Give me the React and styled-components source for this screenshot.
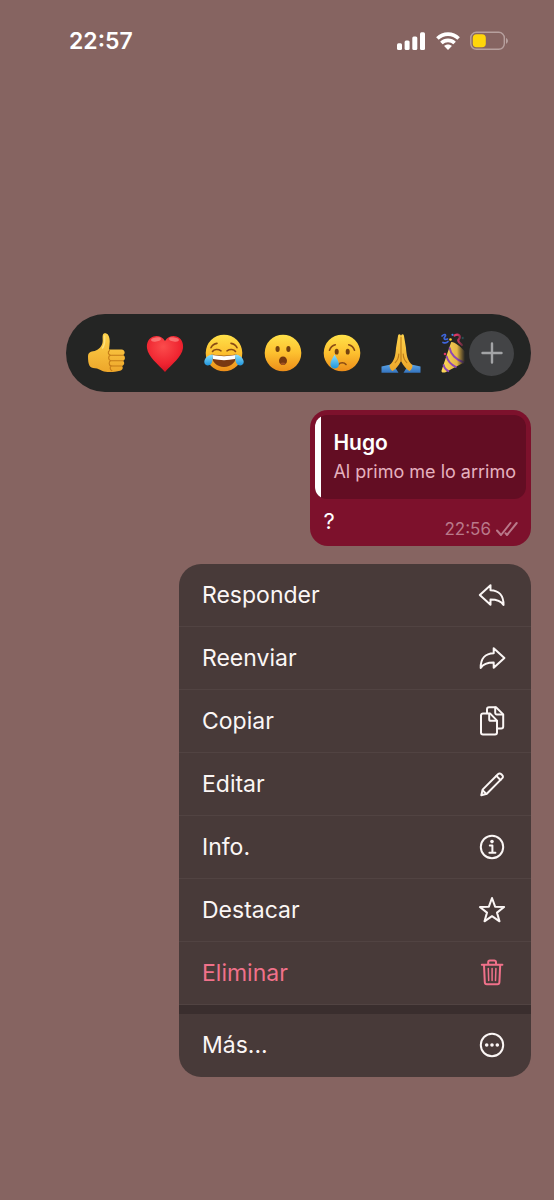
import React from "react";
import styled, { createGlobalStyle } from "styled-components";

const GlobalStyle = createGlobalStyle`
  * {
    box-sizing: border-box;
  }
  body {
    margin: 0;
    background: #866461;
    color: #fff;
    font-family: Inter, "Liberation Sans", sans-serif;
  }
  button {
    font: inherit;
    color: inherit;
    border: 0;
    padding: 0;
    background: none;
    cursor: pointer;
  }
`;

const Screen = styled.div`
  min-height: 100vh;
  background: #866461;
`;

const StatusBar = styled.header`
  display: flex;
  justify-content: space-between;
  align-items: center;
  height: 82px;
  padding: 0 45px 0 69px;
`;

const Clock = styled.time`
  font-size: 23px;
  line-height: 28px;
  font-weight: 600;
`;

const StatusIcons = styled.div`
  display: flex;
  align-items: center;
  gap: 10px;
  svg {
    display: block;
  }
`;

const Content = styled.main`
  display: flex;
  flex-direction: column;
  align-items: flex-end;
  gap: 18px;
  padding: 232px 23px 40px 66px;
`;

const ReactionBar = styled.div`
  display: flex;
  align-items: center;
  width: 100%;
  height: 78px;
  padding: 0 17px 0 20px;
  border-radius: 39px;
  background: #242524;
`;

const ReactionList = styled.div`
  display: flex;
  flex: 1;
  min-width: 0;
  gap: 19px;
  overflow: hidden;
  mask-image: linear-gradient(to left, transparent, #000 8px);
`;

const Reaction = styled.button`
  flex: none;
  width: 40px;
  height: 40px;
  svg {
    display: block;
  }
`;

const AddReaction = styled.button`
  display: grid;
  place-items: center;
  flex: none;
  width: 45px;
  height: 45px;
  margin-left: 4px;
  border-radius: 50%;
  background: #434446;
`;

const Bubble = styled.article`
  padding: 5px;
  border-radius: 18px;
  background: #7d112c;
`;

const Quote = styled.blockquote`
  display: flex;
  margin: 0;
  height: 84px;
  overflow: hidden;
  border-radius: 12px;
  background: #630d23;
  &::before {
    content: "";
    width: 6px;
    background: #fff;
  }
`;

const QuoteBody = styled.div`
  padding: 14px 10px 0 12px;
`;

const QuoteAuthor = styled.div`
  font-size: 21px;
  line-height: 28px;
  font-weight: 600;
`;

const QuoteText = styled.div`
  font-size: 18px;
  line-height: 30px;
  color: #e5b1bf;
`;

const BubbleFooter = styled.div`
  display: flex;
  justify-content: space-between;
  height: 42px;
  padding: 7px 8px 0;
`;

const MessageText = styled.span`
  font-size: 22px;
  line-height: 30px;
`;

const Meta = styled.span`
  display: flex;
  align-items: center;
  align-self: flex-end;
  gap: 5px;
  font-size: 17px;
  line-height: 24px;
  color: #b9798a;
`;

const Menu = styled.div`
  width: calc(100% - 113px);
  overflow: hidden;
  border-radius: 22px;
  background: #483a39;
`;

const MenuItem = styled.button`
  display: flex;
  align-items: center;
  justify-content: space-between;
  width: 100%;
  height: 63px;
  padding: 0 24px 0 23px;
  border-bottom: 1px solid ${props => (props.$last ? "transparent" : "#514342")};
  font-size: 23px;
  line-height: 30px;
  text-align: left;
  color: ${props => (props.$danger ? "#f0718a" : "#fbf6f5")};
  svg {
    overflow: visible;
  }
`;

const MenuDivider = styled.div`
  height: 9px;
  background: #3a2e2e;
`;

const Icon = ({ children }) => (
  <svg
    width="30"
    height="30"
    viewBox="0 0 30 30"
    fill="none"
    stroke="currentColor"
    strokeWidth="2"
    strokeLinecap="round"
    strokeLinejoin="round"
    aria-hidden="true"
  >
    {children}
  </svg>
);

const replyPath =
  "M13.5 5.2V10.2C22 10.4 26.7 15.700 26.500 25C24 21 19.5 19.6 13.5 19.6V24.7L2.8 14.9Z";

const icons = {
  reply: (
    <Icon>
      <path d={replyPath} />
    </Icon>
  ),
  forward: (
    <Icon>
      <path d={replyPath} transform="matrix(-1 0 0 1 30.2 0)" />
    </Icon>
  ),
  copy: (
    <Icon>
      <path d="M6 7.4h7l7 7.2v11.900a2 2 0 0 1-2 2H6a2 2 0 0 1-2-2V9.4a2 2 0 0 1 2-2Z" />
      <path d="M12.2 7.8v5.4a1.6 1.6 0 0 0 1.6 1.6h5.8" />
      <path d="M10 7.2V3.2a2 2 0 0 1 2-2h7l7.2 7.2v12.2a2 2 0 0 1-2 2H20.4" />
      <path d="M18.2 1.6v5.2a1.6 1.6 0 0 0 1.6 1.6h6" />
    </Icon>
  ),
  edit: (
    <Icon>
      <path d="M4.300 26.300l1.300-5.700L21.200 5a2 2 0 0 1 2.900 0l1.200 1.200a2 2 0 0 1 0 2.900L9.800 24.700Z" />
      <path d="M19.4 6.900l4.100 4.100M5.800 21.400l3.300 3.300" />
    </Icon>
  ),
  info: (
    <Icon>
      <circle cx="15" cy="15" r="11.2" />
      <circle cx="15" cy="9.6" r="1.8" fill="currentColor" stroke="none" />
      <path d="M12.8 13.5h2.6v7M12.4 20.700h6" />
    </Icon>
  ),
  star: (
    <Icon>
      <path d="M15 3l3.100 8.700 9 .3-7.100 5.600 2.500 8.700L15 21.200l-7.500 5.100L10 17.600 2.900 12l9-.3Z" />
    </Icon>
  ),
  trash: (
    <Icon>
      <path d="M4.8 6.7h20.6M11.2 6.5V4.2a1.7 1.7 0 0 1 1.700-1.700h4.400A1.7 1.7 0 0 1 19 4.200v2.300" />
      <path d="M7 7l.8 17.300a2 2 0 0 0 2 1.900h10.600a2 2 0 0 0 2-1.900l.8-17.300" />
      <path d="M11.3 10.600l.4 12M15.100 10.600v12M18.900 10.600l-.4 12" strokeWidth="1.500" />
    </Icon>
  ),
  more: (
    <Icon>
      <circle cx="15" cy="15" r="11.2" />
      <g fill="currentColor" stroke="none">
        <circle cx="9.7" cy="15" r="1.8" />
        <circle cx="15" cy="15" r="1.8" />
        <circle cx="20.3" cy="15" r="1.8" />
      </g>
    </Icon>
  )
};

const DefsSvg = styled.svg`
  display: block;
`;

// gradients shared by all the emoji
const EmojiDefs = () => (
  <DefsSvg width="0" height="0" aria-hidden="true">
    <defs>
      <linearGradient id="face" x1="0" y1="0" x2="0" y2="1">
        <stop offset="0" stopColor="#ffe24a" />
        <stop offset="0.5" stopColor="#fdc02f" />
        <stop offset="1" stopColor="#ec8d19" />
      </linearGradient>
      <linearGradient id="skin" x1="0" y1="0" x2="0" y2="1">
        <stop offset="0" stopColor="#ffd34b" />
        <stop offset="1" stopColor="#eda62a" />
      </linearGradient>
      <radialGradient id="heart" cx="0.45" cy="0.3" r="0.8">
        <stop offset="0" stopColor="#fb4c4c" />
        <stop offset="0.6" stopColor="#ef2430" />
        <stop offset="1" stopColor="#c50d20" />
      </radialGradient>
      <linearGradient id="tear" x1="0" y1="0" x2="0" y2="1">
        <stop offset="0" stopColor="#8fe0fb" />
        <stop offset="1" stopColor="#1e95dd" />
      </linearGradient>
      <linearGradient id="sleeve" x1="0" y1="0" x2="0" y2="1">
        <stop offset="0" stopColor="#5ca7ec" />
        <stop offset="1" stopColor="#3473bd" />
      </linearGradient>
      <linearGradient id="cone" x1="0" y1="0" x2="1" y2="0">
        <stop offset="0" stopColor="#ffd95a" />
        <stop offset="1" stopColor="#cf9a38" />
      </linearGradient>
    </defs>
  </DefsSvg>
);

const Emoji = ({ children }) => (
  <svg width="40" height="40" viewBox="0 0 40 40" fill="none" aria-hidden="true">
    {children}
  </svg>
);

const reactions = [
  {
    name: "Me gusta",
    art: (
      <Emoji>
        <path
          d="M2 23c0-3 2-4.5 5-4.8 5-.6 8-4 9.3-7.8C17.3 7.5 16 4 17 1.500c.8-1.700 3.600-1.700 5 .3 2.600 3.700 1.700 9.200 1 14.700h12.500c3.600 0 4.200 4.700 1.400 5.600 2.800.8 2.600 5 0 5.600 2 1 1.700 4.700-.9 5.200 1.400 1.200.9 4.200-1.900 4.800-5.600 1.500-13.500 2-17.600.3-3-1.200-4.500-2.500-7.500-2.700C3.500 35 2 32 2 23Z"
          fill="url(#skin)"
        />
        <path
          d="M37 22.200H25.500M36.800 27.800H25.500M35.500 33H25.500M23.500 17.500c-2 1.300-1.500 4 1 4.800-2.500.7-2.500 4.500.3 5.400-2.300.8-2.200 4.500.4 5.300-1.700 1-1.200 3.600.7 4.700"
          stroke="#c47b17"
          strokeWidth="1.1"
          strokeLinecap="round"
        />
        <path d="M18.700 3c-.2 4 .8 8-2.200 12" stroke="#ffe27b" strokeWidth="1.5" strokeLinecap="round" />
      </Emoji>
    )
  },
  {
    name: "Me encanta",
    art: (
      <Emoji>
        <path
          d="M20 8C17.500 3.500 12.500 2 8.500 3.400 3.500 5 1.300 10 2 15.200 3.200 24 13 31 20 39 27 31 36.800 24 38 15.200 38.700 10 36.500 5 31.500 3.400 27.500 2 22.500 3.500 20 8Z"
          fill="url(#heart)"
        />
        <ellipse cx="11" cy="6.5" rx="5" ry="2" fill="#ff9a94" opacity="0.6" transform="rotate(-8 11 6.5)" />
        <ellipse cx="29" cy="6.5" rx="5" ry="2" fill="#ff9a94" opacity="0.6" transform="rotate(8 29 6.5)" />
      </Emoji>
    )
  },
  {
    name: "Me divierte",
    art: (
      <Emoji>
        <circle cx="20" cy="20" r="18.3" fill="url(#face)" />
        <path
          d="M8.500 18.500c1.500-2.300 5.500-2.700 8.500-.7M23 17.800c3-2 7-1.600 8.500.7M7 14.700c1.200-2.500 3.500-4 6-4.300M33 14.700c-1.200-2.500-3.500-4-6-4.300"
          stroke="#8a4b14"
          strokeWidth="1.6"
          strokeLinecap="round"
        />
        <path d="M7.500 21.500c8 1.500 17 1.500 25 0C32.500 29 27 34 20 34S7.500 29 7.500 21.500Z" fill="#7a3812" />
        <path d="M8.200 22c8 1.500 15.600 1.500 23.600 0 0 1.800-.3 3-1 4-7 1.500-14.600 1.500-21.600 0-.7-1-1-2.200-1-4Z" fill="#fff" />
        <path d="M8.800 21.500C5 21.500.8 24.500.3 28.500c-.4 4 4.700 5.300 6.900 2.300 1.800-2.500 1.600-6 1.600-9.300Z" fill="url(#tear)" />
        <path d="M31.200 21.500c3.800 0 8 3 8.500 7 .4 4-4.700 5.300-6.900 2.300-1.800-2.500-1.600-6-1.600-9.300Z" fill="url(#tear)" />
      </Emoji>
    )
  },
  {
    name: "Me asombra",
    art: (
      <Emoji>
        <circle cx="20" cy="20" r="18.3" fill="url(#face)" />
        <ellipse cx="14.600" cy="16" rx="2.100" ry="2.900" fill="#75420f" />
        <ellipse cx="25.400" cy="16" rx="2.100" ry="2.900" fill="#75420f" />
        <ellipse cx="20" cy="27.800" rx="4" ry="4.300" fill="#75370f" />
        <path d="M17.200 30.600c1.600-1.500 4-1.500 5.600 0-1.500 2-4.100 2-5.600 0Z" fill="#a2501f" />
      </Emoji>
    )
  },
  {
    name: "Me entristece",
    art: (
      <Emoji>
        <circle cx="20" cy="20" r="18.3" fill="url(#face)" />
        <ellipse cx="14.700" cy="18.700" rx="2" ry="2.900" fill="#75420f" />
        <ellipse cx="25.700" cy="18.700" rx="2" ry="2.900" fill="#75420f" />
        <path
          d="M7.500 17.200c1-3 3-4.800 5.800-5.500M32.500 17.200c-1-3-3-4.800-5.800-5.500M16.500 31.500c1.800-2.400 5.700-2.400 7.500 0"
          stroke="#8a4b14"
          strokeWidth="1.6"
          strokeLinecap="round"
        />
        <path d="M12.600 21.500c2.200 4 4.300 6.800 4.300 9.700 0 5.800-8.500 5.800-8.500 0 0-2.900 2-5.700 4.200-9.700Z" fill="url(#tear)" />
      </Emoji>
    )
  },
  {
    name: "Gracias",
    art: (
      <Emoji>
        <path d="M.5 33.500L12 31l5.500 8.800H.5ZM39.500 33.500L28 31l-5.500 8.800h17Z" fill="url(#sleeve)" />
        <path d="M17 3c.3-2.500 2.700-2.300 3 .2V28c-2.500 5-5.500 8.500-8.500 10-2-1.200-3-3.500-3-5.800 5-4.200 6-10.200 6.500-17.200Z" fill="url(#skin)" />
        <path d="M23 3c-.3-2.500-2.700-2.300-3 .2V28c2.500 5 5.500 8.500 8.500 10 2-1.200 3-3.500 3-5.800-5-4.200-6-10.200-6.500-17.200Z" fill="url(#skin)" />
        <path d="M20 4v24M17.800 21c-.1 4-1.600 6.600-3.600 8.600M22.200 21c.1 4 1.600 6.600 3.600 8.600" stroke="#bd7a18" strokeWidth="1.1" strokeLinecap="round" />
      </Emoji>
    )
  },
  {
    name: "Celebrar",
    art: (
      <Emoji>
        <path d="M2.500 39.500C1.500 39 1.300 38 1.700 37L11 9.500c2-3 20 12 18 17.500L5 39.500Z" fill="url(#cone)" />
        <path d="M9.500 14.500c1 6.500 6.500 12.500 14.500 15M6.500 23c1 4.500 5 9 10 11.300M3.500 31.500c.5 3 2.500 5.500 5.500 7" stroke="#8f47b4" strokeWidth="1.900" />
        <path d="M2 3c2.500-2.500 4.500-1.500 3 .5-2 2.500 0 3.500 2.500 2.500M3 9.500c2 .8 4 .3 5-1" stroke="#3f66dc" strokeWidth="1.700" strokeLinecap="round" />
        <path d="M14.500 2.500c4-2 7 .5 4.500 3.500-2 2 1 4 3 6" stroke="#dc3868" strokeWidth="2.200" strokeLinecap="round" />
        <circle cx="10.500" cy="6.500" r="1.300" fill="#ffcf32" />
        <circle cx="5" cy="21" r="1.300" fill="#dc3868" />
        <circle cx="12.500" cy="1.800" r="1.100" fill="#3f8be0" />
        <circle cx="23" cy="5" r="1.300" fill="#35a5b8" />
      </Emoji>
    )
  }
];

const actions = [
  { label: "Responder", icon: "reply" },
  { label: "Reenviar", icon: "forward" },
  { label: "Copiar", icon: "copy" },
  { label: "Editar", icon: "edit" },
  { label: "Info.", icon: "info" },
  { label: "Destacar", icon: "star" },
  { label: "Eliminar", icon: "trash", danger: true }
];

const App = () => (
  <Screen>
    <GlobalStyle />
    <EmojiDefs />
    <StatusBar>
      <Clock>22:57</Clock>
      <StatusIcons>
        <svg width="29" height="20" viewBox="0 0 29 20" fill="#fff" aria-hidden="true">
          <rect x="0" y="12.300" width="5" height="6.700" rx="1.500" />
          <rect x="7.600" y="9.500" width="5" height="9.500" rx="1.500" />
          <rect x="15.300" y="5.500" width="5" height="13.500" rx="1.500" />
          <rect x="23" y="1.300" width="5" height="17.700" rx="1.500" />
        </svg>
        <svg width="24" height="20" viewBox="0 0 24 20" fill="none" stroke="#fff" strokeWidth="3.600" aria-hidden="true">
          <path d="M1.400 7.500C7.300 1.700 16.700 1.700 22.600 7.500" />
          <path d="M5.400 12C9 8.500 15 8.500 18.600 12" />
          <path d="M12 19L8.100 15c2.200-2 5.600-2 7.800 0Z" fill="#fff" stroke="none" />
        </svg>
        <svg width="39" height="20" viewBox="0 0 39 20" aria-hidden="true">
          <rect x="0.800" y="1.300" width="33.500" height="17" rx="5.500" fill="none" stroke="#b7a09e" strokeWidth="1.400" />
          <rect x="2.800" y="3.300" width="13" height="13" rx="3.800" fill="#ffd60a" />
          <path d="M36 7c2.600 1 2.600 4.800 0 5.800Z" fill="#b7a09e" />
        </svg>
      </StatusIcons>
    </StatusBar>
    <Content>
      <ReactionBar>
        <ReactionList>
          {reactions.map(({ name, art }) => (
            <Reaction key={name} aria-label={name}>
              {art}
            </Reaction>
          ))}
        </ReactionList>
        <AddReaction aria-label="Más reacciones">
          <svg width="22" height="22" viewBox="0 0 22 22" stroke="#a3a4a6" strokeWidth="2.400" strokeLinecap="round" aria-hidden="true">
            <path d="M11 1.500v19M1.500 11h19" />
          </svg>
        </AddReaction>
      </ReactionBar>
      <Bubble>
        <Quote>
          <QuoteBody>
            <QuoteAuthor>Hugo</QuoteAuthor>
            <QuoteText>Al primo me lo arrimo</QuoteText>
          </QuoteBody>
        </Quote>
        <BubbleFooter>
          <MessageText>?</MessageText>
          <Meta>
            22:56
            <svg width="22" height="16" viewBox="0 0 22 16" fill="none" stroke="currentColor" strokeWidth="2" strokeLinecap="round" strokeLinejoin="round" aria-hidden="true">
              <path d="M1 9.500l4 4.500L14.500 2M9.500 12.200l1.500 1.800L20.700 2" />
            </svg>
          </Meta>
        </BubbleFooter>
      </Bubble>
      <Menu>
        {actions.map(({ label, icon, danger }) => (
          <MenuItem key={label} $danger={danger}>
            {label}
            {icons[icon]}
          </MenuItem>
        ))}
        <MenuDivider />
        <MenuItem $last>
          Más...
          {icons.more}
        </MenuItem>
      </Menu>
    </Content>
  </Screen>
);

export default App;
